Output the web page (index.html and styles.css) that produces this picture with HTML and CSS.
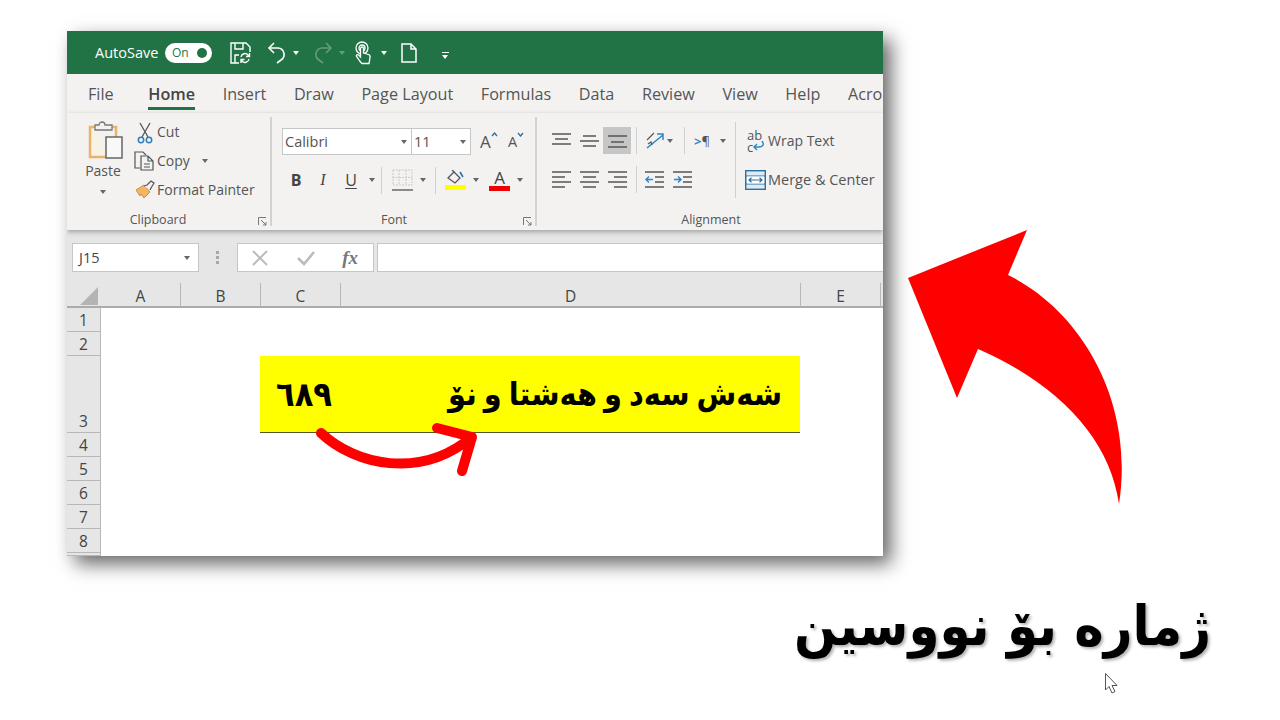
FILE: index.html
```html
<!DOCTYPE html>
<html lang="en">
<head>
    <meta charset="utf-8">
    <title>Excel</title>
    <link rel="stylesheet" href="styles.css">
</head>
<body>
    <div class="window">
        <div class="title-bar">
            <span class="autosave">AutoSave</span>
            <span class="toggle">On<i class="toggle-dot"></i></span>
            <svg class="m18" width="21" height="22" viewBox="0 0 21 22" fill="none" stroke="#fff" stroke-width="1.4"><path d="M9 21H1V1h15l4 4v5"/><path d="M5 1v6h8V1M5 21v-8h4"/><path d="M11 15a4 4 0 0 1 7-2l1.500 1.500M19.500 11v3.500H16M19 17a4 4 0 0 1-7 2l-1-1M11 21v-3.500h3.500"/></svg>
            <svg class="m16" width="20" height="24" viewBox="0 0 20 24" fill="none" stroke="#fff" stroke-width="1.6"><path d="M7 2 2 7l5 5"/><path d="M2 7h9a6.500 6.500 0 0 1 3 12l-4 3"/></svg>
            <i class="caret caret-white m6"></i>
            <svg class="m14 dim" width="20" height="24" viewBox="0 0 20 24" fill="none" stroke="#fff" stroke-width="1.6"><path d="m13 2 5 5-5 5"/><path d="M18 7H9a6.500 6.500 0 0 0-3 12l4 3"/></svg>
            <i class="caret caret-white m6 dim"></i>
            <svg class="m9" width="18" height="24" viewBox="0 0 18 24" fill="none" stroke="#fff" stroke-width="1.3"><circle cx="8" cy="7" r="6"/><circle cx="8" cy="7" r="3"/><path d="M6.500 21 2.500 15.500c-.7-1.500 1-2.500 2-1.500l2 2V7.500c0-2 3-2 3 0V12l5 1.500c1.500.5 1.800 1.500 1.500 3L15 22.500H8z" fill="#217346"/></svg>
            <i class="caret caret-white m9"></i>
            <svg class="m14" width="16" height="20" viewBox="0 0 16 20" fill="none" stroke="#fff" stroke-width="1.5"><path d="M1 1h9l5 5v13H1zM10 1v5h5"/></svg>
            <span class="qat-more m25"></span>
        </div>

        <div class="tabs">
            <span class="file-tab">File</span>
            <span class="active-tab">Home</span>
            <span>Insert</span>
            <span>Draw</span>
            <span>Page Layout</span>
            <span>Formulas</span>
            <span>Data</span>
            <span>Review</span>
            <span>View</span>
            <span>Help</span>
            <span>Acro</span>
        </div>

        <div class="ribbon">
            <div class="group group-clipboard">
                <div class="group-body">
                    <div class="paste">
                        <svg width="40" height="42" viewBox="0 0 40 42" fill="none"><path d="M12 7H7v30h17" stroke="#eab36a" stroke-width="2.500" fill="#f8f1e6"/><path d="M29 7h4v10" stroke="#eab36a" stroke-width="2.500"/><path d="M12 10V5h4a3 3 0 0 1 6 0h7v5z" stroke="#777" stroke-width="1.300" fill="#f3f2f1"/><rect x="23" y="17" width="16" height="21" fill="#f8f8f8" stroke="#666" stroke-width="1.500"/></svg>
                        <span>Paste</span>
                        <i class="caret"></i>
                    </div>
                    <div class="clip-list">
                        <div class="clip-row">
                            <svg class="icon-cut" width="16" height="22" viewBox="0 0 16 22" fill="none"><path d="M3 1 11 15M13 1 5 15" stroke="#555" stroke-width="1.300"/><circle cx="4" cy="18" r="2.700" stroke="#2e7fc0" stroke-width="1.500"/><circle cx="12" cy="18" r="2.700" stroke="#2e7fc0" stroke-width="1.500"/></svg>
                            <span>Cut</span>
                        </div>
                        <div class="clip-row">
                            <svg class="icon-copy" width="20" height="20" viewBox="0 0 20 20" fill="none" stroke="#555" stroke-width="1.200"><path d="M6 17H1V1h8l3 3"/><path d="M7 5h7l5 5v9H7zM14 5v5h5M10 13h6M10 16h6" fill="#f3f2f1"/></svg>
                            <span>Copy</span>
                            <i class="caret m12"></i>
                        </div>
                        <div class="clip-row">
                            <svg class="icon-painter" width="21" height="19" viewBox="0 0 21 19" fill="none"><path d="M1 10 9 5l6 7-6 6-3-4-1 2z" fill="#f0b566" stroke="#d98c3a"/><path d="m9 6 3-1 4-4 3 2-3 5-1 2" fill="#f3f2f1" stroke="#555" stroke-width="1.200"/></svg>
                            <span>Format Painter</span>
                        </div>
                    </div>
                </div>
                <div class="group-label">Clipboard
                    <svg class="launcher" width="9" height="9" viewBox="0 0 9 9" fill="none" stroke="#777"><path d="M8 .5H.5V8M3 3l5 5M8 5v3H5"/></svg>
                </div>
            </div>

            <div class="group group-font">
                <div class="group-body group-col">
                    <div class="font-top">
                        <div class="combo combo-name">Calibri<i class="caret"></i></div>
                        <div class="combo combo-size">11<i class="caret"></i></div>
                        <span class="size-btn m9">A<svg width="7" height="5" viewBox="0 0 7 5" fill="none" stroke="#2c6e9e" stroke-width="1.300"><path d="m1 4 2.500-3L6 4"/></svg></span>
                        <span class="size-btn size-small m10">A<svg width="7" height="5" viewBox="0 0 7 5" fill="none" stroke="#2c6e9e" stroke-width="1.300"><path d="m1 1 2.500 3L6 1"/></svg></span>
                    </div>
                    <div class="font-bottom">
                        <span class="fmt fmt-bold">B</span>
                        <span class="fmt fmt-italic m15">I</span>
                        <span class="fmt fmt-under m16">U</span>
                        <i class="caret m12"></i>
                        <i class="sep m6"></i>
                        <svg class="m10" width="21" height="23" viewBox="0 0 21 23" fill="none"><path d="M1 1h19v15H1zM7 1v15M14 1v15M1 8.500h19" stroke="#c9c9c9" stroke-dasharray="2 1"/><path d="M0 21h21" stroke="#666" stroke-width="1.500"/></svg>
                        <i class="caret m7"></i>
                        <i class="sep m9"></i>
                        <span class="swatch-btn m9">
                            <svg width="21" height="15" viewBox="0 0 21 15" fill="none"><path d="m3 8 6-6 6 6-5 5z" stroke="#555" stroke-width="1.300"/><path d="M9 2 7 0M15 2l3 5" stroke="#2d73a8" stroke-width="1.600"/></svg>
                            <i class="swatch swatch-yellow"></i>
                        </span>
                        <i class="caret m7"></i>
                        <span class="swatch-btn swatch-letter m10">A<i class="swatch swatch-red"></i></span>
                        <i class="caret m7"></i>
                    </div>
                </div>
                <div class="group-label">Font
                    <svg class="launcher" width="9" height="9" viewBox="0 0 9 9" fill="none" stroke="#777"><path d="M8 .5H.5V8M3 3l5 5M8 5v3H5"/></svg>
                </div>
            </div>

            <div class="group group-align">
                <div class="group-body">
                    <div class="align-col">
                        <div class="align-row">
                            <svg width="19" height="16" viewBox="0 0 19 16" stroke="#555" stroke-width="1.500"><path d="M0 1h19M3 6h13M0 11h19"/></svg>
                            <svg class="m9" width="19" height="16" viewBox="0 0 19 16" stroke="#555" stroke-width="1.500"><path d="M3 3h13M0 8h19M3 13h13"/></svg>
                            <span class="align-on m4"><svg width="19" height="16" viewBox="0 0 19 16" stroke="#555" stroke-width="1.500"><path d="M0 3h19M3 9h13M0 14h19"/></svg></span>
                            <i class="sep m5"></i>
                            <svg class="m8" width="20" height="20" viewBox="0 0 20 20" fill="none"><path d="M2 17 18 4M12 3h6v6" stroke="#2d86c4" stroke-width="1.500"/><path d="M2 9 9 2M3 13l3-2 1 3" stroke="#555" stroke-width="1.200"/></svg>
                            <i class="caret m2"></i>
                            <i class="sep m11"></i>
                            <span class="para m9"><b>&gt;</b>¶</span>
                            <i class="caret m10"></i>
                        </div>
                        <div class="align-row align-row-low">
                            <svg width="19" height="18" viewBox="0 0 19 18" stroke="#555" stroke-width="1.500"><path d="M0 1h19M0 6h13M0 11h19M0 16h13"/></svg>
                            <svg class="m9" width="19" height="18" viewBox="0 0 19 18" stroke="#555" stroke-width="1.500"><path d="M0 1h19M3 6h13M0 11h19M3 16h13"/></svg>
                            <svg class="m9" width="19" height="18" viewBox="0 0 19 18" stroke="#555" stroke-width="1.500"><path d="M0 1h19M6 6h13M0 11h19M6 16h13"/></svg>
                            <i class="sep m9"></i>
                            <svg class="m8" width="19" height="18" viewBox="0 0 19 18" fill="none"><path d="M0 1h19M10 6h9M10 11h9M0 16h19" stroke="#555" stroke-width="1.500"/><path d="M8 8.500H1M4 5.500l-3 3 3 3" stroke="#2d86c4" stroke-width="1.500"/></svg>
                            <svg class="m9" width="19" height="18" viewBox="0 0 19 18" fill="none"><path d="M0 1h19M10 6h9M10 11h9M0 16h19" stroke="#555" stroke-width="1.500"/><path d="M1 8.500h7M5 5.500l3 3-3 3" stroke="#2d86c4" stroke-width="1.500"/></svg>
                        </div>
                    </div>
                    <i class="sep sep-tall"></i>
                    <div class="wrap-col">
                        <div class="wrap-row">
                            <span class="wrap-icon">ab<br>c<svg width="11" height="10" viewBox="0 0 11 10" fill="none" stroke="#2d86c4" stroke-width="1.400"><path d="M9 0c3 4 0 6-3 6H1M4 3 1 6l3 3"/></svg></span>
                            <span class="wrap-text">Wrap Text</span>
                        </div>
                        <div class="wrap-row merge-row">
                            <svg width="21" height="20" viewBox="0 0 21 20" fill="none"><rect x=".7" y=".7" width="19.600" height="18.600" fill="#dcebf5" stroke="#2c6e9e" stroke-width="1.400"/><path d="M1 6h19M1 14h19" stroke="#2c6e9e"/><rect x="2" y="6.500" width="17" height="7" fill="#fff"/><path d="M4 10h13M6.500 7.700 4 10l2.500 2.300M14.500 7.700 17 10l-2.500 2.300" stroke="#2c6e9e" stroke-width="1.200"/></svg>
                            <span>Merge &amp; Center</span>
                        </div>
                    </div>
                </div>
                <div class="group-label">Alignment</div>
            </div>
        </div>

        <div class="formula-bar">
            <div class="name-box">J15<i class="caret"></i></div>
            <span class="grip"></span>
            <div class="fx-box">
                <svg width="18" height="18" viewBox="0 0 18 18" fill="none" stroke="#bcbcbc" stroke-width="2"><path d="m2 2 14 14M16 2 2 16"/></svg>
                <svg width="20" height="18" viewBox="0 0 20 18" fill="none" stroke="#bcbcbc" stroke-width="2.600"><path d="m2 9 6 6L18 3"/></svg>
                <span class="fx">fx</span>
            </div>
            <div class="formula-input"></div>
        </div>

        <div class="sheet">
            <div class="head corner"><svg width="18" height="18" viewBox="0 0 18 18"><path d="M18 0v18H0z" fill="#b4b4b4"/></svg></div>
            <div class="head col">A</div>
            <div class="head col">B</div>
            <div class="head col">C</div>
            <div class="head col">D</div>
            <div class="head col">E</div>
            <div class="head col col-rest"></div>
            <div class="row-num">1</div>
            <div class="row-num">2</div>
            <div class="row-num">3</div>
            <div class="row-num">4</div>
            <div class="row-num">5</div>
            <div class="row-num">6</div>
            <div class="row-num">7</div>
            <div class="row-num">8</div>
            <div class="row-num"></div>
            <div class="yellow-cell">
                <span class="cell-number" dir="rtl">٦٨٩</span>
                <span class="cell-words" dir="rtl">شەش سەد و هەشتا و نۆ</span>
            </div>
        </div>
    </div>

    <div class="caption" dir="rtl">ژمارە بۆ نووسین</div>

    <svg class="overlay" width="1280" height="720" viewBox="0 0 1280 720" fill="none">
        <path d="M908 278 1027 230 1008 275C1080 310 1135 400 1119 504 1110 440 1060 385 978 349L957 398Z" fill="#f00"/>
        <path d="M321 433C355 465 420 480 472 437M437 428 472 437 462 471" stroke="#f00" stroke-width="10" stroke-linecap="round" stroke-linejoin="round"/>
        <path d="M1105.500 673.500V690L1109 686.500 1112 693 1115 691.500 1112 685.500H1117Z" fill="#fff" stroke="#555"/>
    </svg>
</body>
</html>
```

FILE: styles.css
```css
html, body{
    margin: 0;
    height: 100%;
}
body{
    width: 1280px;
    height: 720px;
    overflow: hidden;
    position: relative;
    background-color: #fff;
    font-family: "Open Sans", "Noto Sans", sans-serif;
    color: #444;
}
i{
    display: block;
    font-style: normal;
}
svg{
    display: block;
    flex-shrink: 0;
}

/* spacing between toolbar items */
.m2{ margin-left: 2px; }
.m4{ margin-left: 4px; }
.m5{ margin-left: 5px; }
.m6{ margin-left: 6px; }
.m7{ margin-left: 7px; }
.m8{ margin-left: 8px; }
.m9{ margin-left: 9px; }
.m10{ margin-left: 10px; }
.m11{ margin-left: 11px; }
.m12{ margin-left: 12px; }
.m14{ margin-left: 14px; }
.m15{ margin-left: 15px; }
.m16{ margin-left: 16px; }
.m18{ margin-left: 18px; }
.m25{ margin-left: 25px; }

.window{
    width: 816px;
    height: 525px;
    margin: 31px 0 0 67px;
    background-color: #fff;
    box-shadow: 8px 8px 18px rgba(0,0,0,0.6);
    display: flex;
    flex-direction: column;
    overflow: hidden;
}

.caret{
    width: 0;
    height: 0;
    border-left: 3.5px solid transparent;
    border-right: 3.5px solid transparent;
    border-top: 4px solid #666;
    flex-shrink: 0;
}
.caret-white{
    border-top-color: #fff;
}
.dim{
    opacity: 0.3;
}
.sep{
    width: 1px;
    height: 27px;
    background-color: #cfcfcf;
    flex-shrink: 0;
}

/* title bar */
.title-bar{
    height: 43px;
    flex-shrink: 0;
    background-color: #217346;
    display: flex;
    align-items: center;
    padding-left: 28px;
    color: #fff;
}
.autosave{
    font-size: 14.5px;
    width: 70px;
}
.toggle{
    width: 47px;
    height: 20px;
    border-radius: 10px;
    background-color: #fff;
    color: #217346;
    font-size: 12px;
    line-height: 20px;
    padding-left: 7px;
    box-sizing: border-box;
    position: relative;
}
.toggle-dot{
    position: absolute;
    right: 5px;
    top: 5px;
    width: 10px;
    height: 10px;
    border-radius: 50%;
    background-color: #217346;
}
.qat-more{
    width: 7px;
    height: 1px;
    border-top: 1px solid #fff;
    position: relative;
}
.qat-more::after{
    content: "";
    position: absolute;
    left: 0;
    top: 2px;
    border-left: 3.5px solid transparent;
    border-right: 3.5px solid transparent;
    border-top: 4px solid #fff;
}

/* tabs */
.tabs{
    height: 39px;
    flex-shrink: 0;
    background-color: #f3f2f1;
    display: flex;
    align-items: center;
    gap: 27.6px;
    padding-left: 21px;
    font-size: 16.2px;
    white-space: nowrap;
    overflow: hidden;
    position: relative;
    color: #555;
}
.file-tab{
    margin-right: 7px;
}
.active-tab{
    font-weight: 600;
    color: #444;
    position: relative;
}
.active-tab::after{
    content: "";
    position: absolute;
    left: 0;
    right: 0;
    bottom: -5px;
    height: 3px;
    background-color: #217346;
}

/* ribbon */
.ribbon{
    height: 117px;
    flex-shrink: 0;
    background-color: #f3f2f1;
    display: flex;
    position: relative;
    z-index: 1;
    box-shadow: 0 2px 5px rgba(0,0,0,0.3);
    font-size: 14px;
    color: #555;
}
.group{
    display: flex;
    flex-direction: column;
    position: relative;
    box-sizing: border-box;
}
.group-clipboard,
.group-font{
    padding-right: 1px;
}
.group-clipboard::after,
.group-font::after{
    content: "";
    position: absolute;
    right: 0;
    top: 4px;
    bottom: 4px;
    width: 2px;
    background-color: #d2d2d2;
}
.group-clipboard{
    width: 205px;
}
.group-font{
    width: 265px;
}
.group-align{
    flex: 1;
}
.group-body{
    height: 100px;
    display: flex;
}
.group-col{
    flex-direction: column;
}
.group-label{
    height: 14px;
    line-height: 14px;
    text-align: center;
    font-size: 12.5px;
    color: #555;
}
.group-clipboard .group-label{
    padding-right: 22px;
}
.group-font .group-label{
    padding-right: 20px;
}
.group-align .group-label{
    padding-left: 2px;
}
.launcher{
    position: absolute;
    right: 5px;
    bottom: 4px;
}

/* clipboard */
.paste{
    width: 46px;
    margin-left: 13px;
    padding-top: 7px;
    display: flex;
    flex-direction: column;
    align-items: center;
    font-size: 14px;
}
.paste span{
    margin-top: -1px;
}
.paste .caret{
    margin-top: 10px;
}
.clip-list{
    margin-left: 8px;
    padding-top: 4px;
}
.clip-row{
    height: 29px;
    display: flex;
    align-items: center;
    position: relative;
    padding-left: 23px;
    white-space: nowrap;
}
.clip-row svg{
    position: absolute;
    top: 5px;
}
.icon-cut{ left: 3px; }
.icon-copy{ left: 0; }
.icon-painter{ left: 1px; }

/* font */
.font-top{
    display: flex;
    align-items: center;
    margin: 15px 0 0 10px;
}
.combo{
    height: 27px;
    box-sizing: border-box;
    background-color: #fff;
    border: 1px solid #c6c6c6;
    display: flex;
    align-items: center;
    justify-content: space-between;
    padding: 0 4px 0 2px;
    font-size: 14.5px;
}
.combo-name{
    width: 130px;
}
.combo-size{
    width: 60px;
    margin-left: -1px;
}
.size-btn{
    display: flex;
    width: 18px;
    font-size: 17px;
    line-height: 20px;
}
.size-small{
    font-size: 14.5px;
}
.font-bottom{
    display: flex;
    align-items: center;
    height: 28px;
    margin: 11px 0 0 18px;
}
.fmt{
    width: 12px;
    text-align: center;
    font-size: 16px;
    color: #444;
}
.fmt-bold{
    font-weight: 700;
}
.fmt-italic{
    font-family: "Liberation Serif", serif;
    font-style: italic;
}
.fmt-under{
    text-decoration: underline;
    text-underline-offset: 2px;
}
.swatch-btn{
    width: 21px;
    display: flex;
    flex-direction: column;
    align-items: center;
}
.swatch-letter{
    font-size: 17px;
    line-height: 16px;
    color: #444;
}
.swatch{
    width: 21px;
    height: 5px;
}
.swatch-yellow{
    background-color: #ffff00;
}
.swatch-red{
    background-color: #f00000;
}

/* alignment */
.align-col{
    margin: 14px 0 0 15px;
}
.align-row{
    display: flex;
    align-items: center;
    height: 27px;
}
.align-row-low{
    margin-top: 12px;
}
.align-on{
    width: 28px;
    height: 27px;
    background-color: #c6c6c6;
    display: flex;
    align-items: center;
    justify-content: center;
}
.para{
    width: 16px;
    font-size: 13px;
    white-space: nowrap;
}
.para b{
    color: #2d86c4;
}
.sep-tall{
    height: 76px;
    margin: 9px 0 0 9px;
}
.wrap-col{
    padding-top: 14px;
    margin-left: 7px;
}
.wrap-row{
    height: 27px;
    display: flex;
    align-items: center;
    white-space: nowrap;
    gap: 2px;
}
.wrap-icon{
    width: 19px;
    height: 24px;
    margin-left: 2px;
    padding-left: 2px;
    position: relative;
    font-size: 13px;
    line-height: 12px;
}
.wrap-icon svg{
    position: absolute;
    left: 8px;
    top: 12px;
}
.merge-row{
    margin: 12px 0 0 2px;
    font-size: 14.5px;
}

/* formula bar */
.formula-bar{
    height: 53px;
    flex-shrink: 0;
    background-color: #e6e6e6;
    display: flex;
    align-items: flex-start;
    padding-top: 13px;
    box-sizing: border-box;
}
.name-box{
    width: 127px;
    height: 29px;
    margin-left: 5px;
    box-sizing: border-box;
    background-color: #fff;
    border: 1px solid #c6c6c6;
    display: flex;
    align-items: center;
    justify-content: space-between;
    padding: 0 8px 0 6px;
    font-size: 14.5px;
}
.grip{
    width: 3px;
    height: 3px;
    margin: 8px 0 0 17px;
    background-color: #a8a8a8;
    box-shadow: 0 5px 0 #a8a8a8, 0 10px 0 #a8a8a8;
}
.fx-box{
    width: 137px;
    height: 29px;
    margin-left: 18px;
    box-sizing: border-box;
    background-color: #fff;
    border: 1px solid #c6c6c6;
    display: flex;
    align-items: center;
    justify-content: space-between;
    padding: 0 15px 0 13px;
}
.fx{
    font-family: "Liberation Serif", serif;
    font-style: italic;
    font-weight: 700;
    font-size: 19px;
    color: #777;
}
.formula-input{
    flex: 1;
    height: 29px;
    margin-left: 3px;
    box-sizing: border-box;
    background-color: #fff;
    border: 1px solid #c6c6c6;
    border-right: 0;
}

/* sheet */
.sheet{
    flex: 1;
    display: grid;
    grid-template-columns: 34px 79px 80px 80px 460px 80px 1fr;
    grid-template-rows: 25px 24px 24px 77px 24px 24px 24px 24px 24px 1fr;
    font-size: 15.5px;
    color: #444;
    background-color: #fff;
}
.head{
    background-color: #e6e6e6;
    border-bottom: 2px solid #ababab;
    box-sizing: border-box;
}
.corner{
    display: flex;
    justify-content: flex-end;
    align-items: flex-end;
    padding: 0 3px 1px 0;
}
.col{
    text-align: center;
    line-height: 26px;
}
.col + .col{
    border-left: 1px solid #b8b8b8;
}
.row-num{
    grid-column: 1;
    background-color: #e6e6e6;
    border-bottom: 1px solid #b8b8b8;
    border-right: 1px solid #b8b8b8;
    box-sizing: border-box;
    display: flex;
    align-items: flex-end;
    justify-content: center;
    line-height: 21px;
}
.yellow-cell{
    grid-column: 4 / 6;
    grid-row: 4;
    background-color: #ffff00;
    border-bottom: 1px solid #55552a;
    box-sizing: border-box;
    display: flex;
    justify-content: space-between;
    align-items: center;
    padding: 0 18px 0 16px;
    font-family: "DejaVu Sans Condensed", "DejaVu Sans", sans-serif;
    font-weight: 700;
    color: #000;
}
.cell-number{
    font-size: 34px;
}
.cell-words{
    font-size: 32px;
    word-spacing: -3px;
}

/* caption and hand drawn marks on top of the picture */
.caption{
    position: absolute;
    right: 69px;
    bottom: 54px;
    font-family: "DejaVu Sans Condensed", "DejaVu Sans", sans-serif;
    font-weight: 700;
    font-size: 55.5px;
    line-height: 80px;
    color: #000;
    text-shadow: 2px 2px 3px rgba(0,0,0,0.3);
    white-space: nowrap;
}
.overlay{
    position: absolute;
    left: 0;
    top: 0;
    pointer-events: none;
}
```
